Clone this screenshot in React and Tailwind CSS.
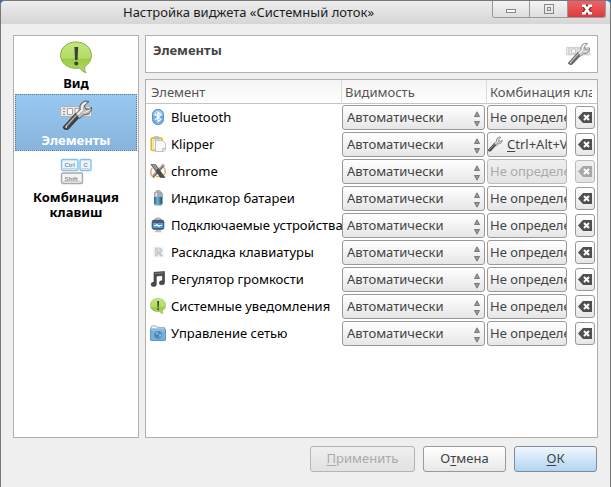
import React, { useState } from "react";

// Speech bubble with an exclamation mark
const BubbleIcon = ({ className }) => (
    <svg viewBox="0 0 32 32" className={className} aria-hidden="true">
        <defs>
            <linearGradient id="bubble" x1="0" y1="0" x2="0" y2="1">
                <stop offset="0" stopColor="#c3e87c" />
                <stop offset="0.52" stopColor="#b4dc68" />
                <stop offset="0.56" stopColor="#9ccb45" />
                <stop offset="1" stopColor="#b2dc62" />
            </linearGradient>
        </defs>
        <path d="M16 1C7.200 1 0.600 6.800 0.600 14.300c0 7.400 6.400 13 15.400 13 1.200 0 2.400-.1 3.500-.3 1.600 2 3.800 4 6.500 4.700-1.300-1.700-1.500-3.900-1.300-6.200 4.100-2.400 6.700-6.500 6.700-11.200C31.400 6.800 24.800 1 16 1z" fill="url(#bubble)" stroke="#86ab45" />
        <path d="M14.400 6h3.800l-.6 13h-2.600z" fill="#3d4436" />
        <circle cx="16.300" cy="22.500" r="2" fill="#3d4436" />
    </svg>
);

const WrenchShape = () => (
    <>
        <path d="M3.500 28.500L16 15l4 3.500L8.500 31c-2.500 1.500-6.500-.5-5-2.500z" fill="#454545" stroke="#2b2b2b" strokeWidth="0.800" />
        <path d="M6 28.500L17 16.500" stroke="#b5b5b5" strokeWidth="1.400" />
        <circle cx="6.200" cy="29" r="0.900" fill="#ddd" />
        <path d="M15.500 16l4.500-4.500c-1-4 1.500-8 6-8.500l3 .5-4.500 4 1 3.500 3.500.5 2.500-2.500c.5 4.500-3 8-8 8l-4 3.500z" fill="#b9bbbb" stroke="#505050" strokeWidth="0.900" />
        <path d="M17.500 16.500l4.500-4.500c-.8-3 .8-6 4-7.500" fill="none" stroke="#f7f7f7" strokeWidth="1.500" />
        <path d="M23.500 14.500c2.500 0 4.500-1 6-3" fill="none" stroke="#e6e6e6" strokeWidth="1.100" />
    </>
);

const PanelIcon = ({ className }) => (
    <svg viewBox="0 0 32 32" className={className} aria-hidden="true">
        <rect x="0.500" y="8.500" width="31" height="10" rx="1" fill="#e6e6e6" stroke="#b0b0b0" />
        <path d="M3 10.700h2M3 13.500h2M3 16.300h2" stroke="#999" strokeWidth="1.200" />
        <path d="M7.500 10.500h5v6h-5zM15 10.500h4v6h-4zM24 10.500h5v6h-5z" fill="#fafafa" stroke="#a5a5a5" />
        <WrenchShape />
    </svg>
);

const WrenchIcon = ({ className }) => (
    <svg viewBox="2 1 30 32" className={className} aria-hidden="true">
        <WrenchShape />
    </svg>
);

const KeysIcon = ({ className }) => (
    <svg viewBox="0 0 32 32" className={className} aria-hidden="true">
        <g fill="#f2f3f4" strokeWidth="1.400">
            <rect x="1.500" y="4.500" width="16.500" height="11" rx="1.500" stroke="#7fc0ee" />
            <rect x="20" y="4.500" width="11" height="11" rx="1.500" stroke="#7fc0ee" />
            <rect x="1.500" y="18" width="21" height="10.500" rx="1.500" stroke="#a9a9a9" />
        </g>
        <path d="M3 13.500h14M21.500 13.500h8M3 26.500h18" stroke="#cfd1d3" />
        <g fontFamily="Liberation Sans, sans-serif" fontWeight="bold" fontSize="6">
            <text x="4.500" y="12" fill="#5f9fd0">Ctrl</text>
            <text x="23.500" y="12" fill="#5f9fd0">C</text>
            <text x="4.500" y="25.500" fill="#909090">Shift</text>
        </g>
    </svg>
);

const BluetoothIcon = () => (
    <svg viewBox="0 0 16 16" className="size-4 shrink-0" aria-hidden="true">
        <rect x="2.500" y="0.500" width="11" height="15" rx="5" fill="#70aee6" stroke="#5590c8" />
        <path d="M3.500 7V5c0-2 1.500-3.500 4.500-3.500S12.500 3 12.500 5v2z" fill="#a0ccf2" />
        <path d="M5 5l5.800 5.400L8 12.800V3.200l2.800 2.400L5 11" fill="none" stroke="#fff" strokeWidth="1.200" />
    </svg>
);

const ClipboardIcon = () => (
    <svg viewBox="0 0 16 16" className="size-4 shrink-0" aria-hidden="true">
        <rect x="1.200" y="2" width="11" height="12.500" rx="1" fill="#f3e9ae" stroke="#dfb91d" strokeWidth="1.500" />
        <rect x="4" y="0.500" width="5" height="2.500" rx="1" fill="#c5c5bd" stroke="#999" strokeWidth="0.500" />
        <path d="M3.500 4h7l1 9h-8z" fill="#f5f5f1" stroke="#ccc" strokeWidth="0.500" />
        <path d="M5.500 4.500h7l3 3V14L14 15.500H5.500z" fill="#f8f8f8" stroke="#aaa" strokeWidth="0.700" />
        <path d="M15.500 12.500h-3v3" fill="#ddd" stroke="#aaa" strokeWidth="0.600" />
    </svg>
);

const XIcon = () => (
    <svg viewBox="0 0 16 16" className="size-4 shrink-0" aria-hidden="true">
        <path d="M2 5c-1.500 3-1.500 6 0 8M14 4c1.500 3 1.500 6 0 8M6 13.500h4" fill="none" stroke="#f0a868" strokeWidth="1.500" />
        <path d="M14 1.500L2.500 14" stroke="#b0ada7" strokeWidth="3" />
        <path d="M13.500 3L3 14.500" stroke="#6d6a66" strokeWidth="1.200" />
        <path d="M1 1.500h4.500L15 14.500h-4.500z" fill="#4e4e4e" stroke="#393939" strokeWidth="0.600" />
        <path d="M1.500 1.500H5l3 4-2 2z" fill="#999" />
    </svg>
);

const BatteryIcon = () => (
    <svg viewBox="0 0 16 16" className="size-4 shrink-0" aria-hidden="true">
        <defs>
            <linearGradient id="cell">
                <stop offset="0" stopColor="#24618b" />
                <stop offset="0.400" stopColor="#6fb3d9" />
                <stop offset="1" stopColor="#184b70" />
            </linearGradient>
        </defs>
        <rect x="6" y="0.500" width="4.500" height="3" rx="1" fill="#aab0b3" stroke="#828889" strokeWidth="0.500" />
        <rect x="4" y="2" width="8.500" height="13.500" rx="2" fill="url(#cell)" />
        <path d="M4 4c0-3 8.500-3 8.500 0v3H4z" fill="#a5adb1" />
        <path d="M6.300 3v3.500" stroke="#eef2f4" strokeWidth="1.200" />
        <path d="M4.500 14c1 1.500 6.500 1.500 7.500 0" fill="none" stroke="#bbb" strokeWidth="0.800" />
    </svg>
);

const DeviceIcon = () => (
    <svg viewBox="0 0 16 16" className="size-4 shrink-0" aria-hidden="true">
        <path d="M5 4V2.500C5 0.500 11 0.500 11 2.500V4" fill="#ddd" stroke="#999" />
        <rect x="2" y="3" width="12" height="9.500" rx="2.200" fill="#525b65" stroke="#3f464e" strokeWidth="0.600" />
        <rect x="2.800" y="6" width="10.400" height="5" fill="#42a0ed" />
        <path d="M4 8.500h8M6 8.500l1.500-1.400M8 8.500l1.500 1.400" stroke="#fff" strokeWidth="1.100" />
        <path d="M6 13h4.500l1.500 2.300H4.500z" fill="#bfc1c4" />
    </svg>
);

const LayoutIcon = () => (
    <svg viewBox="0 0 16 16" className="size-4 shrink-0" aria-hidden="true">
        <rect x="3" y="2.500" width="11" height="11" rx="1" fill="#f4f4f4" />
        <text x="5" y="11.500" fontFamily="Liberation Sans, sans-serif" fontWeight="bold" fontSize="10" fill="#e9e9e9" stroke="#b5b5b5" strokeWidth="0.700">R</text>
    </svg>
);

const NoteIcon = () => (
    <svg viewBox="0 0 16 16" className="size-4 shrink-0" aria-hidden="true">
        <path d="M4 1.300L14.500 0.500v11.200a2.600 2 0 1 1-2-1.900V4.500L6.300 5v8.300a2.600 2.100 0 1 1-2.300-2z" fill="#4a4a4a" stroke="#353535" strokeWidth="0.600" />
        <path d="M5 2.500l8.500-.6" stroke="#8b8b8b" strokeWidth="0.800" />
    </svg>
);

const FolderIcon = () => (
    <svg viewBox="0 0 16 16" className="size-4 shrink-0" aria-hidden="true">
        <path d="M1 6V1.800L2 0.900h4l1.200 1.500h7.300v4" fill="#f3f5f6" stroke="#8b9aa5" strokeWidth="0.800" />
        <rect x="0.500" y="4" width="15" height="11.500" rx="0.600" fill="#78b0dd" stroke="#4c86b7" strokeWidth="0.800" />
        <path d="M1 5h14" stroke="#a7d0f0" />
        <circle cx="8" cy="9.800" r="3.900" fill="#5086b5" />
        <path d="M5.500 7.800l2.500-.8.500 1.500-1.500 1.500zM9 9.500l2-.8.300 2-1.800 2z" fill="#8bbce2" />
    </svg>
);

const SpinArrows = () => (
    <svg viewBox="0 0 6 16" className="pointer-events-none absolute right-[5px] top-[6px] h-4 w-[6px]" aria-hidden="true">
        <path d="M3 0.800L5.500 5.500h-5zM3 15.200L0.500 10.500h5z" fill="#9a9a9a" stroke="#666" strokeWidth="0.800" />
    </svg>
);

const ClearIcon = () => (
    <svg viewBox="0 0 14 11" className="h-[11px] w-[14px]" aria-hidden="true">
        <path d="M5 0h9v11H5L0 5.500z" fill="currentColor" />
        <path d="M6 3l5 5M11 3L6 8" stroke="#fff" strokeWidth="2" />
    </svg>
);

const pages = [
    { id: "view", label: "Вид", icon: <BubbleIcon className="size-8" /> },
    { id: "items", label: "Элементы", icon: <PanelIcon className="size-8" /> },
    { id: "keys", label: "Комбинация клавиш", icon: <KeysIcon className="size-8" /> }
];

const trayItems = [
    { name: "Bluetooth", icon: <BluetoothIcon /> },
    { name: "Klipper", icon: <ClipboardIcon />, shortcut: "Ctrl+Alt+V" },
    { name: "chrome", icon: <XIcon />, disabled: true },
    { name: "Индикатор батареи", icon: <BatteryIcon /> },
    { name: "Подключаемые устройства", icon: <DeviceIcon /> },
    { name: "Раскладка клавиатуры", icon: <LayoutIcon /> },
    { name: "Регулятор громкости", icon: <NoteIcon /> },
    { name: "Системные уведомления", icon: <BubbleIcon className="size-4 shrink-0" /> },
    { name: "Управление сетью", icon: <FolderIcon /> }
];

const TitleBar = () => (
    <header className="flex h-[23px] items-start bg-linear-to-b from-[#ededed] to-[#d6d6d6] pl-1 pr-1">
        <h1 className="flex-1 truncate text-center leading-[22px] text-[#1c1c1c]">
            Настройка виджета «Системный лоток»
        </h1>
        <div className="flex h-[17px] overflow-hidden rounded-b-[3px] border border-t-0 border-[#999]">
            <button type="button" aria-label="Свернуть" className="flex w-[37px] items-center justify-center border-r border-[#999] bg-linear-to-b from-[#f4f4f4] to-[#dedede]">
                <span className="mt-1 h-1 w-[10px] border border-[#888] bg-white"></span>
            </button>
            <button type="button" aria-label="Развернуть" className="flex w-[38px] items-center justify-center border-r border-[#999] bg-linear-to-b from-[#f4f4f4] to-[#dedede]">
                <span className="flex size-[10px] items-center justify-center border border-[#888]">
                    <span className="size-1 border border-[#888]"></span>
                </span>
            </button>
            <button type="button" aria-label="Закрыть" className="flex w-[37px] items-center justify-center bg-linear-to-b from-[#ee6265] to-[#dc3a3d]">
                <svg viewBox="0 0 12 11" className="h-[11px] w-3" aria-hidden="true">
                    <path d="M3 1.500l6 8M9 1.500l-6 8" stroke="#94282a" strokeWidth="5" />
                    <path d="M3.500 1.500l5 8M8.500 1.500l-5 8M1 1.800h4M7 1.800h4M1 9.200h4M7 9.200h4" stroke="#fff" strokeWidth="2.400" />
                </svg>
            </button>
        </div>
    </header>
);

const App = () => {
    // currently opened settings page
    const [page, setPage] = useState("items");

    return (
        <div className="flex min-h-screen flex-col bg-[#3b6c9d] font-['Noto_Sans',sans-serif] text-[13px] leading-[18px] text-black">
            <div className="flex flex-1 flex-col overflow-hidden rounded-t-[5px] border border-b-0 border-[#777] bg-[#efefef]">
                <TitleBar />

                <main className="flex flex-1 gap-[6px] px-3 pt-[11px]">
                    {/* Page list */}
                    <nav className="w-[126px] shrink-0 border border-[#b0b0b0] bg-white p-px">
                        {pages.map((p) => (
                            <button
                                key={p.id}
                                type="button"
                                onClick={() => setPage(p.id)}
                                className={`flex w-full flex-col items-center gap-[3px] border border-dotted px-2 pb-[2px] pt-[3px] font-bold leading-[15px] ${page === p.id ? "border-[#5f7f9c] bg-linear-to-b from-[#98c8f1] to-[#88b4db] text-white" : "border-transparent"}`}
                            >
                                {p.icon}
                                {p.label}
                            </button>
                        ))}
                    </nav>

                    <section className="flex min-w-0 flex-1 flex-col gap-[6px]">
                        <div className="flex h-[38px] shrink-0 items-start justify-between border border-[#b0b0b0] bg-white px-[7px] py-[5px]">
                            <h2 className="font-bold text-[#444]">Элементы</h2>
                            <PanelIcon className="size-6 opacity-80" />
                        </div>

                        {/* Tray items */}
                        <div className="flex-1 overflow-hidden border border-[#b0b0b0] bg-white">
                            <table className="w-full table-fixed border-separate border-spacing-0">
                                <thead>
                                    <tr className="h-6 bg-linear-to-b from-[#f4f4f4] to-white text-left text-[#555] shadow-[inset_0_-1px_#c4c4c4]">
                                        <th className="py-0 pl-[5px] font-normal">Элемент</th>
                                        <th className="w-[145px] border-l border-[#ddd] py-0 pl-[3px] font-normal">Видимость</th>
                                        <th className="w-[111px] border-l border-[#ddd] py-0 pl-[3px] pr-[5px] font-normal">
                                            <div className="overflow-hidden whitespace-nowrap">Комбинация клавиш</div>
                                        </th>
                                    </tr>
                                </thead>
                                <tbody>
                                    {trayItems.map((item, i) => (
                                        <tr key={item.name} className="h-[27px]">
                                            <td className="p-0 pb-[2px] pl-1">
                                                <label htmlFor={`visibility-${i}`} className="flex items-center gap-[5px] whitespace-nowrap">
                                                    {item.icon}
                                                    {item.name}
                                                </label>
                                            </td>
                                            <td className="p-0 pl-px">
                                                <div className="relative w-[143px]">
                                                    <select
                                                        id={`visibility-${i}`}
                                                        className="block h-[25px] w-full appearance-none rounded-[3px] border border-[#999] bg-linear-to-b from-white to-[#e6e6e6] px-1 pb-[2px] text-[#444]"
                                                    >
                                                        <option>Автоматически</option>
                                                    </select>
                                                    <SpinArrows />
                                                </div>
                                            </td>
                                            <td className="p-0 pl-px">
                                                <div className="flex items-center gap-2">
                                                    <button
                                                        type="button"
                                                        disabled={item.disabled}
                                                        className="flex h-[25px] w-20 items-center overflow-hidden whitespace-nowrap rounded-[3px] border border-[#999] bg-linear-to-b from-white to-[#e6e6e6] pb-[2px] text-[#444] disabled:border-[#bbb] disabled:from-[#efefef] disabled:to-[#e4e4e4] disabled:text-[#aaa]"
                                                    >
                                                        {item.shortcut ? (
                                                            <>
                                                                <WrenchIcon className="-ml-px mr-1 size-4 shrink-0" />
                                                                <span><u className="underline-offset-2">{item.shortcut[0]}</u>{item.shortcut.slice(1)}</span>
                                                            </>
                                                        ) : (
                                                            <span className="pl-[2px]">Не определено</span>
                                                        )}
                                                    </button>
                                                    <button
                                                        type="button"
                                                        disabled={item.disabled}
                                                        aria-label="Очистить"
                                                        className="flex h-[23px] w-5 shrink-0 items-center justify-center rounded-[3px] border border-[#999] bg-linear-to-b from-white to-[#e6e6e6] text-[#505050] disabled:border-[#bbb] disabled:from-[#efefef] disabled:to-[#e4e4e4] disabled:text-[#a8a8a8]"
                                                    >
                                                        <ClearIcon />
                                                    </button>
                                                </div>
                                            </td>
                                        </tr>
                                    ))}
                                </tbody>
                            </table>
                        </div>
                    </section>
                </main>

                {/* Dialog buttons */}
                <footer className="flex justify-end gap-2 px-[13px] pb-[15px] pt-2">
                    <button type="button" disabled className="h-[26px] w-[105px] rounded-[3px] border border-[#b5b5b5] bg-linear-to-b from-[#efefef] to-[#e2e2e2] pb-[2px] text-[#aaa]">
                        <u className="underline-offset-2">П</u>рименить
                    </button>
                    <button type="button" className="h-[26px] w-[83px] rounded-[3px] border border-[#999] bg-linear-to-b from-white to-[#e8e8e8] pb-[2px] text-[#444]">
                        О<u className="underline-offset-2">т</u>мена
                    </button>
                    <button type="button" className="h-[26px] w-[83px] rounded-[3px] border border-[#7f8c98] bg-linear-to-b from-[#f0f7fd] to-[#b2d4f1] pb-[2px] text-[#444]">
                        <u className="underline-offset-2">О</u>К
                    </button>
                </footer>
            </div>
        </div>
    );
};

export default App;
